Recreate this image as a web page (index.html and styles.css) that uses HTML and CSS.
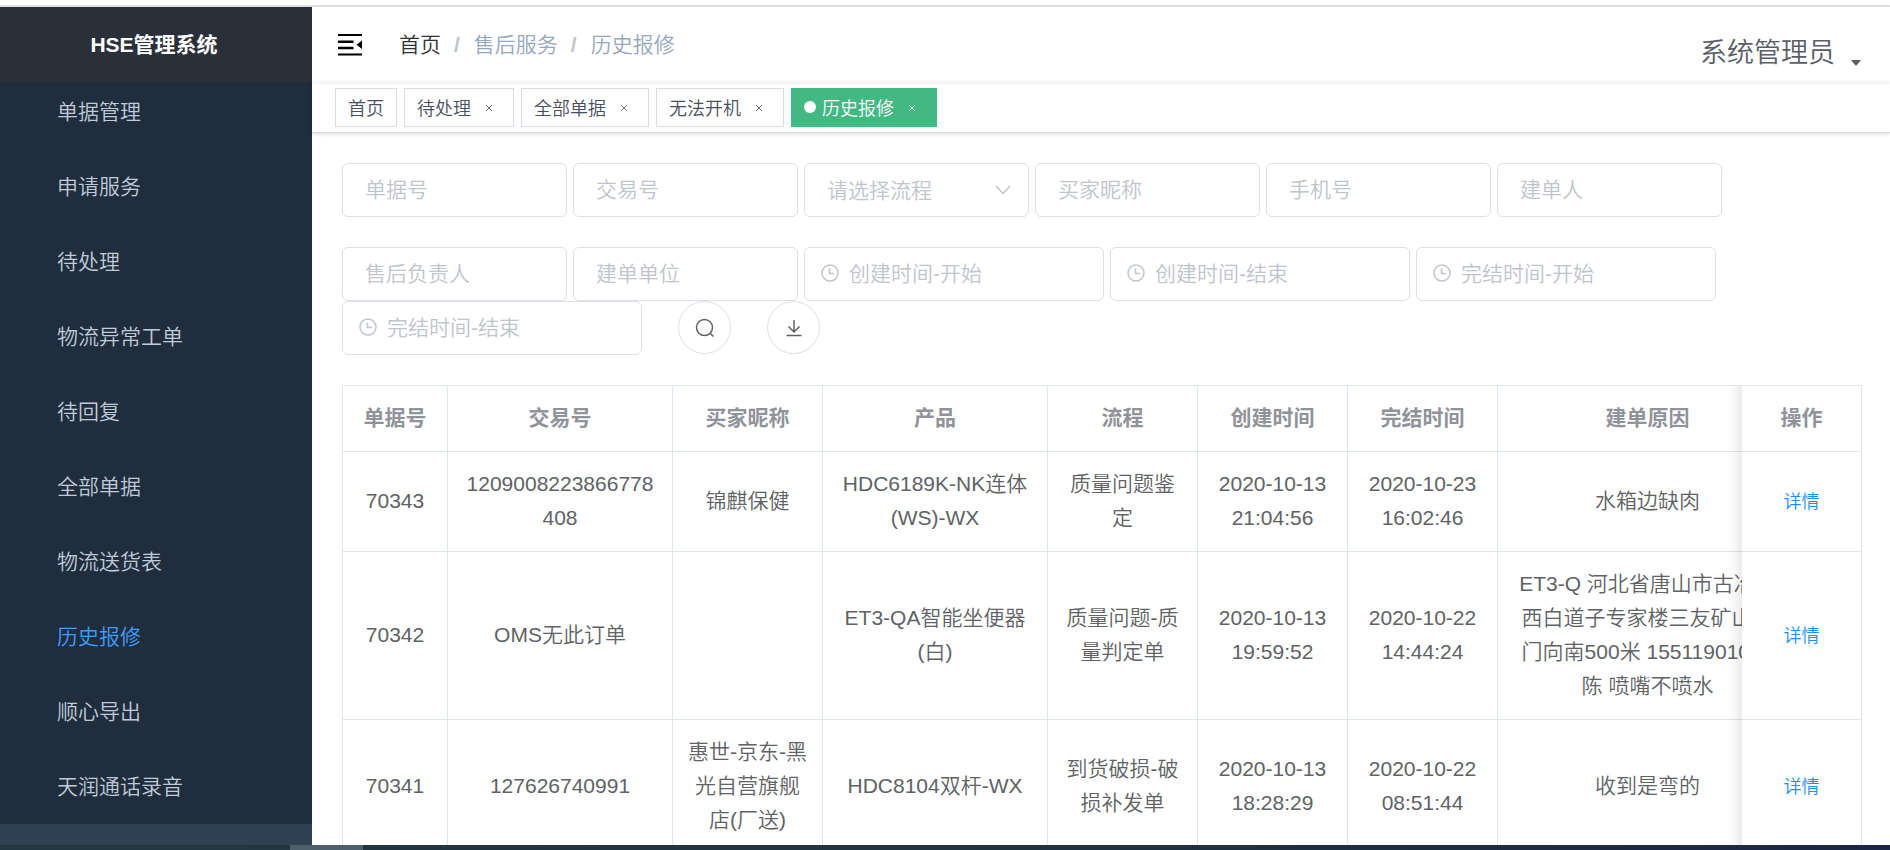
FILE: index.html
```html
<!DOCTYPE html>
<html lang="zh-CN">
<head>
<meta charset="utf-8">
<title>HSE管理系统</title>
<link rel="stylesheet" href="styles.css">
</head>
<body>
<div class="topline"></div>
<div class="app">
  <aside class="sidebar">
    <h1 class="logo">HSE管理系统</h1>
    <nav class="menu">
      <a class="menu-item" href="#">单据管理</a>
      <a class="menu-item" href="#">申请服务</a>
      <a class="menu-item" href="#">待处理</a>
      <a class="menu-item" href="#">物流异常工单</a>
      <a class="menu-item" href="#">待回复</a>
      <a class="menu-item" href="#">全部单据</a>
      <a class="menu-item" href="#">物流送货表</a>
      <a class="menu-item is-active" href="#">历史报修</a>
      <a class="menu-item" href="#">顺心导出</a>
      <a class="menu-item" href="#">天润通话录音</a>
    </nav>
  </aside>
  <main class="main">
    <header class="navbar">
      <button class="fold" type="button" aria-label="折叠菜单">
        <svg width="24" height="22" viewBox="0 0 24 22"><path d="M0 0h24v2H0zM0 6.600h15.500v2.400H0zM0 12.800h15.500v2.400H0zM0 19.600h24v2H0zM24 6.500v8.500l-5.500-4.250z"/></svg>
      </button>
      <nav class="breadcrumb">
        <a class="crumb crumb-home" href="#">首页</a><span class="slash">/</span><span class="crumb">售后服务</span><span class="slash">/</span><span class="crumb">历史报修</span>
      </nav>
      <button class="user" type="button">系统管理员
        <svg class="caret" width="10" height="6" viewBox="0 0 10 6"><path d="M0 0h10L5 6z" fill="currentColor"/></svg>
      </button>
    </header>
    <div class="tags">
      <a class="tag" href="#">首页</a>
      <a class="tag" href="#">待处理<span class="close"><svg width="8" height="8" viewBox="0 0 8 8"><path d="M1 1l6 6M7 1L1 7"/></svg></span></a>
      <a class="tag" href="#">全部单据<span class="close"><svg width="8" height="8" viewBox="0 0 8 8"><path d="M1 1l6 6M7 1L1 7"/></svg></span></a>
      <a class="tag" href="#">无法开机<span class="close"><svg width="8" height="8" viewBox="0 0 8 8"><path d="M1 1l6 6M7 1L1 7"/></svg></span></a>
      <a class="tag is-active" href="#"><span class="dot"></span>历史报修<span class="close"><svg width="8" height="8" viewBox="0 0 8 8"><path d="M1 1l6 6M7 1L1 7"/></svg></span></a>
    </div>
    <section class="content">
      <form class="filters">
        <div class="filter-row">
          <input class="field" type="text" placeholder="单据号" aria-label="单据号">
          <input class="field" type="text" placeholder="交易号" aria-label="交易号">
          <div class="select-wrap">
            <select class="field" aria-label="请选择流程"><option>请选择流程</option></select>
            <svg class="chevron" width="16" height="10" viewBox="0 0 16 10"><path d="M1 1l7 7.500L15 1"/></svg>
          </div>
          <input class="field" type="text" placeholder="买家昵称" aria-label="买家昵称">
          <input class="field" type="text" placeholder="手机号" aria-label="手机号">
          <input class="field" type="text" placeholder="建单人" aria-label="建单人">
        </div>
        <div class="filter-row">
          <input class="field" type="text" placeholder="售后负责人" aria-label="售后负责人">
          <input class="field" type="text" placeholder="建单单位" aria-label="建单单位">
          <div class="date-wrap">
            <svg class="clock" width="18" height="18" viewBox="0 0 18 18"><circle cx="9" cy="9" r="8"/><path d="M8.500 4.500v5H13"/></svg>
            <input class="field field-date" type="text" placeholder="创建时间-开始" aria-label="创建时间-开始">
          </div>
          <div class="date-wrap">
            <svg class="clock" width="18" height="18" viewBox="0 0 18 18"><circle cx="9" cy="9" r="8"/><path d="M8.500 4.500v5H13"/></svg>
            <input class="field field-date" type="text" placeholder="创建时间-结束" aria-label="创建时间-结束">
          </div>
          <div class="date-wrap">
            <svg class="clock" width="18" height="18" viewBox="0 0 18 18"><circle cx="9" cy="9" r="8"/><path d="M8.500 4.500v5H13"/></svg>
            <input class="field field-date" type="text" placeholder="完结时间-开始" aria-label="完结时间-开始">
          </div>
          <div class="date-wrap">
            <svg class="clock" width="18" height="18" viewBox="0 0 18 18"><circle cx="9" cy="9" r="8"/><path d="M8.500 4.500v5H13"/></svg>
            <input class="field field-date" type="text" placeholder="完结时间-结束" aria-label="完结时间-结束">
          </div>
          <button class="round" type="button" aria-label="搜索">
            <svg width="20" height="20" viewBox="0 0 20 20"><circle cx="9.500" cy="9.500" r="8"/><path d="M15 15l3.500 3.500"/></svg>
          </button>
          <button class="round" type="button" aria-label="下载">
            <svg width="18" height="18" viewBox="0 0 18 18"><path d="M9 1v12M3.500 7.500L9 13l5.500-5.500M1.500 16.500h15"/></svg>
          </button>
        </div>
      </form>
      <div class="table-wrap">
        <table class="table">
          <colgroup>
            <col class="w-id"><col class="w-wide"><col class="w-mid"><col class="w-wide"><col class="w-mid"><col class="w-mid"><col class="w-mid"><col class="w-reason"><col class="w-action">
          </colgroup>
          <thead>
            <tr><th>单据号</th><th>交易号</th><th>买家昵称</th><th>产品</th><th>流程</th><th>创建时间</th><th>完结时间</th><th>建单原因</th><th class="fixed">操作</th></tr>
          </thead>
          <tbody>
            <tr><td>70343</td><td>1209008223866778408</td><td>锦麒保健</td><td>HDC6189K-NK连体(WS)-WX</td><td>质量问题鉴定</td><td>2020-10-13 21:04:56</td><td>2020-10-23 16:02:46</td><td>水箱边缺肉</td><td class="fixed"><button class="detail" type="button">详情</button></td></tr>
            <tr><td>70342</td><td>OMS无此订单</td><td></td><td>ET3-QA智能坐便器(白)</td><td>质量问题-质量判定单</td><td>2020-10-13 19:59:52</td><td>2020-10-22 14:44:24</td><td>ET3-Q 河北省唐山市古冶区西白道子专家楼三友矿山大门向南500米 15511901000 陈 喷嘴不喷水</td><td class="fixed"><button class="detail" type="button">详情</button></td></tr>
            <tr><td>70341</td><td>127626740991</td><td>惠世-京东-黑光自营旗舰店(厂送)</td><td>HDC8104双杆-WX</td><td>到货破损-破损补发单</td><td>2020-10-13 18:28:29</td><td>2020-10-22 08:51:44</td><td>收到是弯的</td><td class="fixed"><button class="detail" type="button">详情</button></td></tr>
          </tbody>
        </table>
      </div>
    </section>
  </main>
</div>
<footer class="taskbar"><div class="task"></div></footer>
</body>
</html>
```
FILE: styles.css
```css
* { box-sizing: border-box; }

body {
  margin: 0;
  height: 100vh;
  display: flex;
  flex-direction: column;
  overflow: hidden;
  background: #fff;
  color: #606266;
  font-family: "Liberation Sans", "Noto Sans CJK SC", sans-serif;
  font-size: 21px;
  font-weight: 350;
}

a { color: inherit; text-decoration: none; }

button, input, select {
  margin: 0;
  font: inherit;
  color: inherit;
}

button {
  padding: 0;
  border: 0;
  background: none;
  cursor: pointer;
}

svg { display: block; flex: none; }

.topline {
  flex: none;
  height: 7px;
  border-bottom: 2px solid #e1e1e1;
}

.app {
  flex: 1;
  min-height: 0;
  display: flex;
}

/* Sidebar */
.sidebar {
  flex: none;
  width: 312px;
  overflow: hidden;
  background: #304156;
}

.logo {
  position: relative;
  z-index: 1;
  margin: 0;
  height: 75px;
  padding-right: 4px;
  line-height: 75px;
  background: #2b2f3a;
  color: #fff;
  font-size: 21px;
  font-weight: 700;
  text-align: center;
}

.menu {
  margin-top: -8px;
  background: #1f2d3d;
}

.menu-item {
  display: block;
  height: 75px;
  padding-left: 57px;
  line-height: 75px;
  color: #bfcbd9;
}

.menu-item.is-active { color: #409eff; }

/* Header */
.main {
  flex: 1;
  min-width: 0;
  display: flex;
  flex-direction: column;
}

.navbar {
  position: relative;
  flex: none;
  display: flex;
  align-items: center;
  height: 75px;
  padding: 0 29px 0 26px;
  box-shadow: 0 1px 4px rgba(0, 21, 41, 0.08);
}

.breadcrumb {
  display: flex;
  margin-left: 37px;
  line-height: 30px;
  color: #97a8be;
}

.crumb-home { color: #303133; }

.slash {
  margin: 0 14px 0 13px;
  color: #c0c4cc;
  font-weight: 700;
}

.user {
  display: flex;
  align-items: flex-end;
  gap: 16px;
  margin-left: auto;
  padding-top: 16px;
  font-size: 27px;
  line-height: 36px;
  color: #5a5e66;
}

.caret { margin-bottom: 5px; }

/* Open page tabs */
.tags {
  flex: none;
  display: flex;
  gap: 7px;
  height: 51px;
  padding: 6px 23px;
  border-bottom: 1px solid #d8dce5;
  box-shadow: 0 1px 4px rgba(0, 0, 0, 0.16);
}

.tag {
  display: flex;
  align-items: center;
  height: 39px;
  padding: 0 12px 2px;
  border: 1px solid #d8dce5;
  font-size: 18px;
  color: #495060;
}

.tag.is-active {
  border-color: #42b983;
  background: #42b983;
  color: #fff;
}

.dot {
  width: 12px;
  height: 12px;
  margin-right: 6px;
  border-radius: 50%;
  background: #fff;
}

.close {
  display: flex;
  justify-content: center;
  width: 24px;
  margin-left: 6px;
}

.close svg {
  margin-top: 3px;
  fill: none;
  stroke: currentColor;
  opacity: 0.8;
}

/* Filters */
.content {
  flex: 1;
  min-height: 0;
  overflow: hidden;
  padding: 30px 28px 0 30px;
}

.filter-row {
  display: flex;
  flex-wrap: wrap;
  column-gap: 6px;
  margin-bottom: 30px;
}

.field {
  display: block;
  width: 225px;
  height: 54px;
  padding: 0 22px;
  border: 1px solid #dcdfe6;
  border-radius: 6px;
  outline: 0;
  background: #fff;
  appearance: none;
}

.field::placeholder { color: #c0c4cc; opacity: 1; }

select.field { color: #c0c4cc; }

.select-wrap, .date-wrap { position: relative; }

.field-date {
  width: 300px;
  padding-left: 44px;
}

.chevron, .clock {
  position: absolute;
  fill: none;
  stroke: #c0c4cc;
  stroke-width: 1.5;
  pointer-events: none;
}

.chevron { top: 22px; right: 18px; }

.clock { top: 17px; left: 17px; }

.round {
  display: flex;
  align-items: center;
  justify-content: center;
  width: 53px;
  height: 53px;
  margin-left: 30px;
  border: 1px solid #dcdfe6;
  border-radius: 50%;
}

.round svg {
  fill: none;
  stroke: #606266;
  stroke-width: 1.5;
}

/* Table */
.table-wrap {
  overflow: hidden;
  border: 1px solid #dfe6ec;
  border-bottom: 0;
}

.table {
  width: 1574px;
  table-layout: fixed;
  border-collapse: separate;
  border-spacing: 0;
  text-align: center;
}

.w-id { width: 105px; }
.w-mid { width: 150px; }
.w-wide { width: 225px; }
.w-reason { width: 300px; }
.w-action { width: 119px; }

.table th, .table td {
  padding: 15px 14px 16px;
  border-right: 1px solid #dfe6ec;
  border-bottom: 1px solid #dfe6ec;
  line-height: 34px;
  word-break: break-all;
}

.table th {
  color: #909399;
  font-weight: 700;
}

.table .fixed {
  position: sticky;
  right: 0;
  border-right: 0;
  background: #fff;
}

/* Shade cast by the pinned column, continuous from row to row */
.table .fixed::before {
  content: "";
  position: absolute;
  top: 0;
  bottom: -1px;
  left: -14px;
  width: 14px;
  background: linear-gradient(to left, rgba(0, 0, 0, 0.08), rgba(0, 0, 0, 0.03) 50%, rgba(0, 0, 0, 0));
  pointer-events: none;
}

.detail {
  font-size: 18px;
  color: #1890ff;
}

/* Desktop taskbar edge */
.taskbar {
  flex: none;
  height: 5px;
  padding-left: 290px;
  background: linear-gradient(90deg, #213841, #21343f 50%, #1a2744);
}

.task {
  width: 73px;
  height: 5px;
  background: #4d616a;
}
```
